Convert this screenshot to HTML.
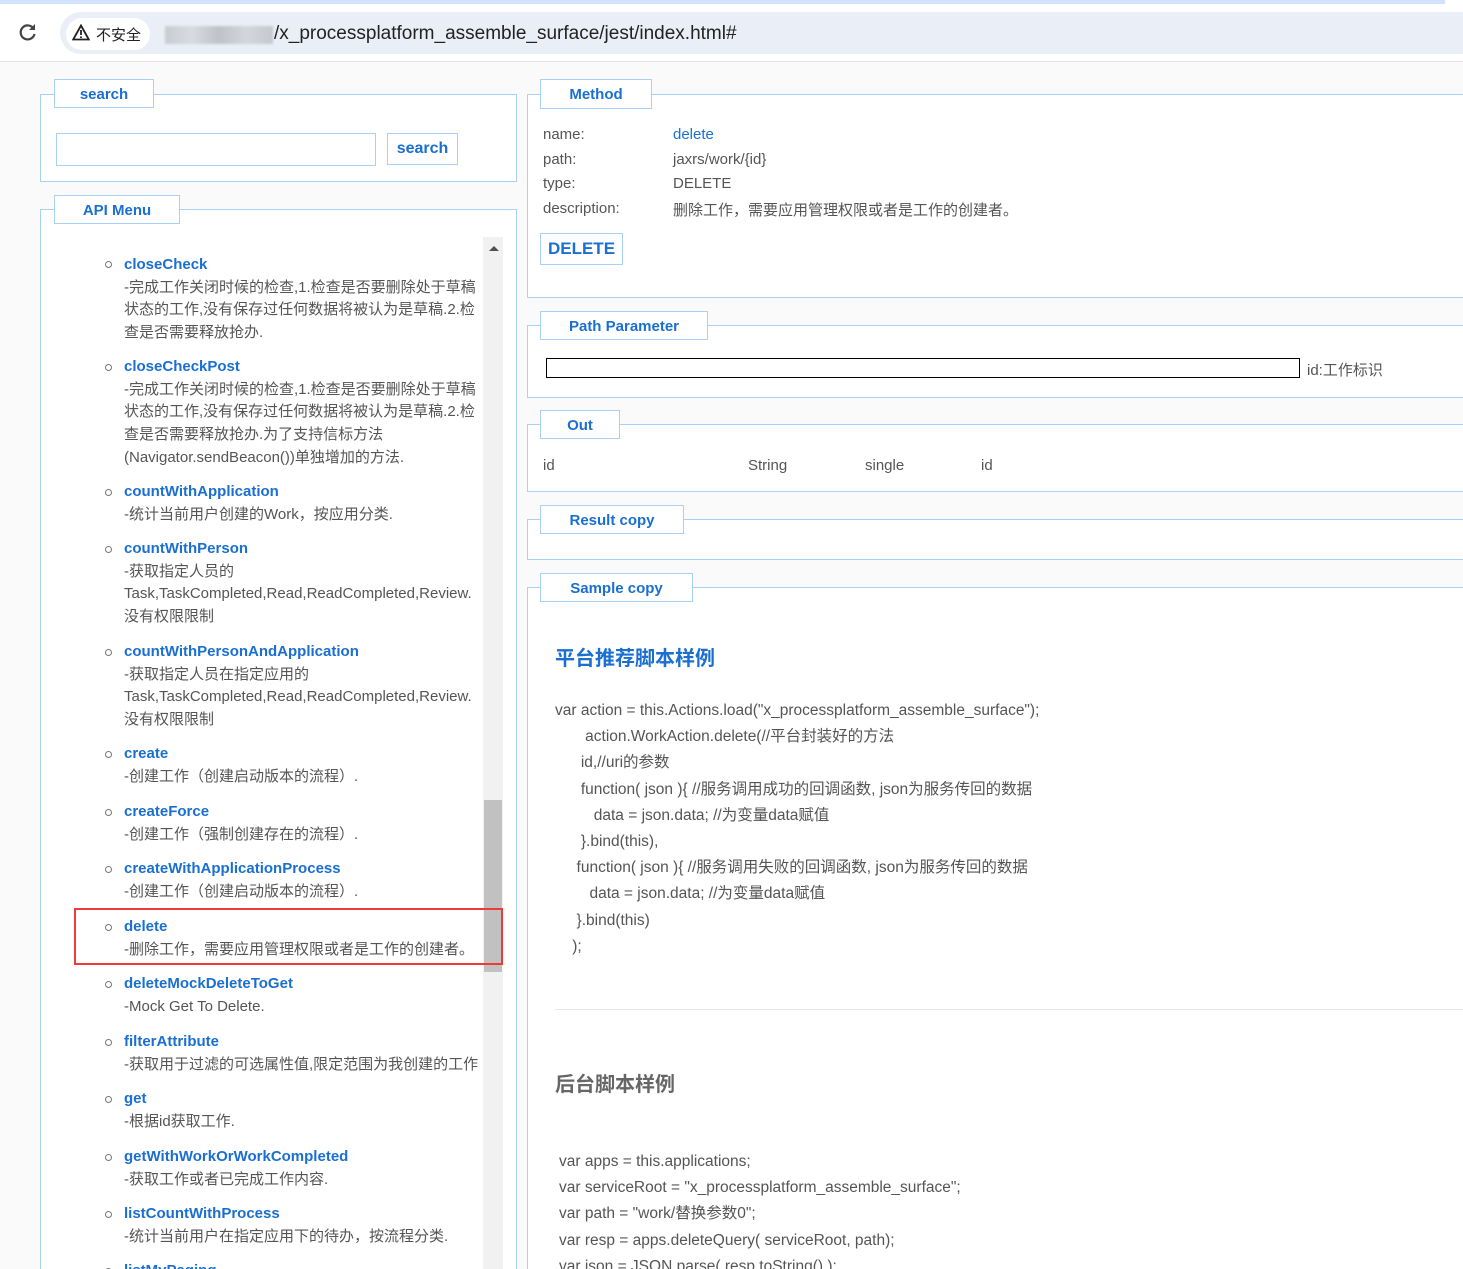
<!DOCTYPE html>
<html style="overflow:hidden;height:1269px"><head><meta charset="utf-8">
<style>
*{margin:0;padding:0;box-sizing:border-box}
body{width:1463px;height:1269px;overflow:hidden;background:#fafafa;font-family:"Liberation Sans","Noto Sans CJK SC",sans-serif;font-size:15px;color:#555;position:relative}
.a{position:absolute;white-space:nowrap}
.fs{position:absolute;border:1px solid #a9d0f5;background:#fff}
.lg{position:absolute;border:1px solid #a9d0f5;background:#fff;color:#1a6fd1;font-weight:bold;font-size:15px;text-align:center;line-height:30px}
.t{position:absolute;left:124px;line-height:22.7px;white-space:nowrap}
.t b{color:#1a6fd1;font-size:15px;display:block;line-height:22.7px}
.bul{position:absolute;left:105px;width:7px;height:7px;border:1.3px solid #777;border-radius:50%}
.code{position:absolute;line-height:26.2px;white-space:pre;font-size:15.5px;color:#555}
</style></head><body>
<div class="a" style="left:0;top:0;width:1463px;height:62px;background:#fff;border-bottom:1px solid #e2e2e2"></div>
<div class="a" style="left:0;top:0;width:1445px;height:4px;background:#d3e3fd"></div>
<div class="a" style="left:60px;top:12px;width:1403px;height:42px;background:#eaeef7;border-radius:21px 0 0 21px"></div>
<div class="a" style="left:66px;top:18px;width:84px;height:32px;background:#fff;border-radius:16px"></div>
<svg class="a" style="left:18px;top:22px" width="20" height="20" viewBox="0 0 20 20"><path d="M15.5 6.5A7 7 0 1 0 16.5 12" fill="none" stroke="#444" stroke-width="2.2"/><path d="M17 2v6h-6z" fill="#444"/></svg>
<svg class="a" style="left:72px;top:24px" width="18" height="17" viewBox="0 0 18 17"><path d="M9 1.5L16.8 15.5H1.2Z" fill="none" stroke="#222" stroke-width="1.8"/><path d="M9 6v5" stroke="#222" stroke-width="1.8"/><circle cx="9" cy="13.2" r="1" fill="#222"/></svg>
<div class="a" style="left:96px;top:24px;font-size:15px;color:#222">不安全</div>
<div class="a" style="left:165px;top:26px;width:108px;height:18px;background:linear-gradient(90deg,#c9ccd3,#d8dbe2,#bfc2c9,#d3d6dd,#c5c8cf);filter:blur(1px)"></div>
<div class="a" style="left:274px;top:23px;font-size:19px;color:#222">/x_processplatform_assemble_surface/jest/index.html#</div>

<div class="fs" style="left:40px;top:94px;width:477px;height:88px"></div>
<div class="lg" style="left:54px;top:79px;width:100px;height:29px">search</div>
<div class="a" style="left:56px;top:133px;width:320px;height:33px;border:1px solid #a9d0f5;background:#fff"></div>
<div class="a" style="left:387px;top:133px;width:71px;height:32px;border:1px solid #a9d0f5;background:#fff;color:#1a6fd1;font-weight:bold;font-size:16px;text-align:center;line-height:30px">search</div>

<div class="fs" style="left:40px;top:209px;width:477px;height:1070px"></div>
<div class="lg" style="left:54px;top:195px;width:126px;height:29px">API Menu</div>
<div class="a" style="left:483px;top:237px;width:20px;height:1032px;background:#f1f1f1"></div>
<div class="a" style="left:484px;top:800px;width:18px;height:172px;background:#c1c1c1"></div>
<svg class="a" style="left:488px;top:244px" width="12" height="8"><path d="M1 7L6 2L11 7Z" fill="#505050"/></svg>

<div class="bul" style="top:261px"></div><div class="t" style="top:254px"><b>closeCheck</b>-完成工作关闭时候的检查,1.检查是否要删除处于草稿<br>状态的工作,没有保存过任何数据将被认为是草稿.2.检<br>查是否需要释放抢办.</div>
<div class="bul" style="top:364px"></div><div class="t" style="top:356px"><b>closeCheckPost</b>-完成工作关闭时候的检查,1.检查是否要删除处于草稿<br>状态的工作,没有保存过任何数据将被认为是草稿.2.检<br>查是否需要释放抢办.为了支持信标方法<br>(Navigator.sendBeacon())单独增加的方法.</div>
<div class="bul" style="top:489px"></div><div class="t" style="top:481px"><b>countWithApplication</b>-统计当前用户创建的Work，按应用分类.</div>
<div class="bul" style="top:546px"></div><div class="t" style="top:538px"><b>countWithPerson</b>-获取指定人员的<br>Task,TaskCompleted,Read,ReadCompleted,Review.<br>没有权限限制</div>
<div class="bul" style="top:649px"></div><div class="t" style="top:641px"><b>countWithPersonAndApplication</b>-获取指定人员在指定应用的<br>Task,TaskCompleted,Read,ReadCompleted,Review.<br>没有权限限制</div>
<div class="bul" style="top:751px"></div><div class="t" style="top:743px"><b>create</b>-创建工作（创建启动版本的流程）.</div>
<div class="bul" style="top:809px"></div><div class="t" style="top:801px"><b>createForce</b>-创建工作（强制创建存在的流程）.</div>
<div class="bul" style="top:866px"></div><div class="t" style="top:858px"><b>createWithApplicationProcess</b>-创建工作（创建启动版本的流程）.</div>
<div class="bul" style="top:924px"></div><div class="t" style="top:916px"><b>delete</b>-删除工作，需要应用管理权限或者是工作的创建者。</div>
<div class="bul" style="top:981px"></div><div class="t" style="top:973px"><b>deleteMockDeleteToGet</b>-Mock Get To Delete.</div>
<div class="bul" style="top:1039px"></div><div class="t" style="top:1031px"><b>filterAttribute</b>-获取用于过滤的可选属性值,限定范围为我创建的工作</div>
<div class="bul" style="top:1096px"></div><div class="t" style="top:1088px"><b>get</b>-根据id获取工作.</div>
<div class="bul" style="top:1154px"></div><div class="t" style="top:1146px"><b>getWithWorkOrWorkCompleted</b>-获取工作或者已完成工作内容.</div>
<div class="bul" style="top:1211px"></div><div class="t" style="top:1203px"><b>listCountWithProcess</b>-统计当前用户在指定应用下的待办，按流程分类.</div>
<div class="bul" style="top:1268px"></div><div class="t" style="top:1260px"><b>listMyPaging</b></div>
<div class="a" style="left:74px;top:908px;width:429px;height:57px;border:2px solid #f03a3a"></div>

<div class="fs" style="left:527px;top:94px;width:950px;height:204px"></div>
<div class="lg" style="left:540px;top:79px;width:112px;height:30px">Method</div>
<div class="a" style="left:543px;top:126px">name:</div><div class="a" style="left:673px;top:126px;color:#1a6fd1">delete</div>
<div class="a" style="left:543px;top:151px">path:</div><div class="a" style="left:673px;top:151px">jaxrs/work/{id}</div>
<div class="a" style="left:543px;top:175px">type:</div><div class="a" style="left:673px;top:175px">DELETE</div>
<div class="a" style="left:543px;top:200px">description:</div><div class="a" style="left:673px;top:199px">删除工作，需要应用管理权限或者是工作的创建者。</div>
<div class="a" style="left:540px;top:233px;width:83px;height:32px;border:1px solid #a9d0f5;background:#fff;color:#1a6fd1;font-weight:bold;font-size:17px;text-align:center;line-height:30px">DELETE</div>

<div class="fs" style="left:527px;top:325px;width:950px;height:73px"></div>
<div class="lg" style="left:540px;top:311px;width:168px;height:29px">Path Parameter</div>
<div class="a" style="left:546px;top:358px;width:754px;height:20px;border:1px solid #000;background:#fff"></div>
<div class="a" style="left:1307px;top:359px">id:工作标识</div>

<div class="fs" style="left:527px;top:424px;width:950px;height:68px"></div>
<div class="lg" style="left:540px;top:410px;width:80px;height:29px">Out</div>
<div class="a" style="left:543px;top:457px">id</div><div class="a" style="left:748px;top:457px">String</div><div class="a" style="left:865px;top:457px">single</div><div class="a" style="left:981px;top:457px">id</div>

<div class="fs" style="left:527px;top:519px;width:950px;height:41px"></div>
<div class="lg" style="left:540px;top:505px;width:144px;height:29px">Result copy</div>

<div class="fs" style="left:527px;top:587px;width:950px;height:690px"></div>
<div class="lg" style="left:540px;top:573px;width:153px;height:29px">Sample copy</div>
<div class="a" style="left:555px;top:642px;font-size:20px;font-weight:bold;color:#1a6fd1">平台推荐脚本样例</div>
<div class="code" style="left:555px;top:698px">var action = this.Actions.load("x_processplatform_assemble_surface");
       action.WorkAction.delete(//平台封装好的方法
      id,//uri的参数
      function( json ){ //服务调用成功的回调函数, json为服务传回的数据
         data = json.data; //为变量data赋值
      }.bind(this),
     function( json ){ //服务调用失败的回调函数, json为服务传回的数据
        data = json.data; //为变量data赋值
     }.bind(this)
    );</div>
<div class="a" style="left:555px;top:1009px;width:910px;height:1px;background:#e6e6e6"></div>
<div class="a" style="left:555px;top:1068px;font-size:20px;font-weight:bold;color:#666">后台脚本样例</div>
<div class="code" style="left:559px;top:1149px">var apps = this.applications;
var serviceRoot = "x_processplatform_assemble_surface";
var path = "work/替换参数0";
var resp = apps.deleteQuery( serviceRoot, path);
var json = JSON.parse( resp.toString() );</div>
</body></html>
